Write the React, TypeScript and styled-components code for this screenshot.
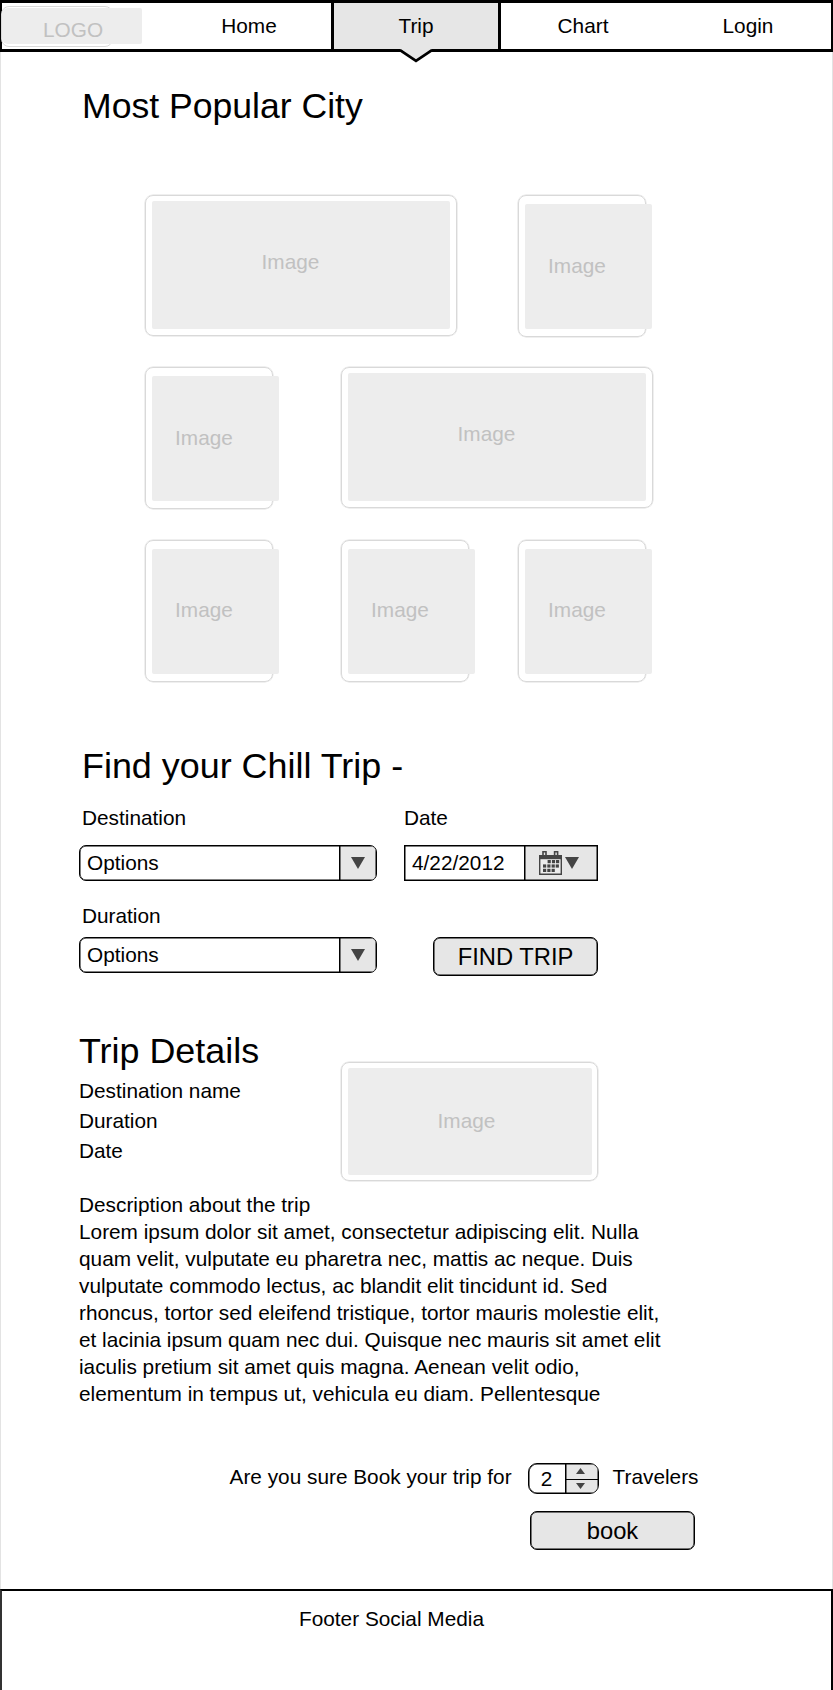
import React from "react";
import styled, { createGlobalStyle } from "styled-components";

const GlobalStyle = createGlobalStyle`
  * { box-sizing: border-box; }
  body {
    margin: 0;
    background: #fff;
    color: #000;
    font: 20.8px/27px "Liberation Sans", Arial, sans-serif;
  }
  h1, h2, p { margin: 0; font-weight: 400; }
  button, input { font: inherit; color: inherit; }
`;

const Page = styled.div`
  width: 833px;
  height: 1690px;
  display: flex;
  flex-direction: column;
  overflow: hidden;
`;

const Nav = styled.nav`
  position: relative;
  flex: none;
  display: grid;
  grid-template-columns: 167px 164px 170px 164px 1fr;
  height: 52px;
  border: solid #000;
  border-width: 3px 2px 3px 0;
`;

const NavItem = styled.a<{ $active?: boolean }>`
  display: flex;
  align-items: center;
  justify-content: center;
  padding-bottom: 1px;
  background: ${(p) => (p.$active ? "#e6e6e6" : "#fff")};
  border: solid #000;
  border-width: ${(p) => (p.$active ? "0 3px" : "0")};
`;

const NavPointer = styled.svg`
  position: absolute;
  left: 399px;
  top: 45px;
`;

const LogoCell = styled.div`
  border-left: 2px solid #000;
`;

const LogoFrame = styled.div`
  width: 112px;
  height: 41px;
  margin: 3px 0 0 -1px;
  padding-top: 1px;
  border: 1px solid #d9d9d9;
  border-radius: 8px;
`;

const LogoFill = styled.div`
  display: flex;
  align-items: center;
  width: 140px;
  height: 36px;
  padding: 6px 0 0 41px;
  border-radius: 6px 2px 2px 6px;
  background: #ededed;
  color: #c1c1c1;
`;

const Main = styled.main`
  flex: none;
  height: 1537px;
  padding-top: 33px;
  border: solid #e3e3e3;
  border-width: 0 1px;
`;

const Title = styled.h2`
  font-size: 35.9px;
  line-height: 42px;
`;

const LeadTitle = styled(Title)`
  font-size: 35.6px;
`;

const Popular = styled.section`
  padding-left: 81px;
`;

const Gallery = styled.div`
  display: flex;
  flex-direction: column;
  gap: 30px;
  width: 509px;
  margin: 68px 0 0 63px;
`;

const GalleryRow = styled.div<{ $columns: string; $height?: number }>`
  display: grid;
  grid-template-columns: ${(p) => p.$columns};
  height: ${(p) => p.$height ?? 142}px;
`;

const frameSizes = {
  wide: { w: 312, h: 141, pad: "5px 6px", iw: 298, ih: 128, text: "0 21px 7px 0" },
  square: { w: 128, h: 142, pad: "8px 6px", iw: 127, ih: 125, text: "0 23px 2px 0" },
  squareRaised: { w: 128, h: 142, pad: "8px 6px", iw: 127, ih: 125, text: "0 23px 4px 0" },
  detail: { w: 257, h: 119, pad: "5px 6px", iw: 244, ih: 107, text: "0 7px 3px 0" },
};

type FrameKind = keyof typeof frameSizes;

const Frame = styled.div<{ $kind: FrameKind }>`
  flex: none;
  width: ${(p) => frameSizes[p.$kind].w}px;
  height: ${(p) => frameSizes[p.$kind].h}px;
  padding: ${(p) => frameSizes[p.$kind].pad};
  border: 1px solid #d9d9d9;
  border-radius: 8px;
  box-shadow: 0 0 0 0.5px #e0e0e0;
`;

const FrameFill = styled.div<{ $kind: FrameKind }>`
  display: flex;
  align-items: center;
  justify-content: center;
  width: ${(p) => frameSizes[p.$kind].iw}px;
  height: ${(p) => frameSizes[p.$kind].ih}px;
  padding: ${(p) => frameSizes[p.$kind].text};
  border-radius: 2px;
  background: #ededed;
  color: #c1c1c1;
`;

const Finder = styled.section`
  margin-top: 63px;
  padding-left: 81px;
`;

const FinderGrid = styled.form`
  display: grid;
  grid-template-columns: 298px 194px;
  column-gap: 27px;
  margin: 17px 0 0 -3px;
`;

const Column = styled.div`
  display: flex;
  flex-direction: column;
`;

const Label = styled.label<{ $indent?: boolean; $top?: number }>`
  margin-top: ${(p) => p.$top ?? 0}px;
  padding-left: ${(p) => (p.$indent ? 3 : 0)}px;
`;

const Control = styled.div<{ $top: number; $square?: boolean }>`
  display: flex;
  height: 36px;
  margin-top: ${(p) => p.$top}px;
  border: 1.5px solid #000;
  border-radius: ${(p) => (p.$square ? 0 : 7)}px;
  box-shadow: inset 0 0 0 0.5px #000;
  overflow: hidden;
`;

const ControlValue = styled.span`
  flex: 1;
  padding: 3px 0 0 7px;
`;

const ControlToggle = styled.span<{ $width: number; $shift?: number }>`
  display: flex;
  align-items: center;
  justify-content: center;
  gap: 3px;
  width: ${(p) => p.$width}px;
  padding: 0 ${(p) => p.$shift ?? 1}px 1px 0;
  background: #e6e6e6;
  border-left: 1px solid #000;
  box-shadow: inset 0 0 0 0.5px #000;
`;

const Button = styled.button`
  width: 165px;
  height: 39px;
  padding: 0;
  border: 1px solid #000;
  border-radius: 7px;
  box-shadow: inset 0 0 0 0.5px #000;
  background: #e6e6e6;
  font-size: 23.75px;
  line-height: 35px;
`;

const FindButton = styled(Button)`
  align-self: flex-end;
  margin-top: 56px;
`;

const Details = styled.section`
  margin-top: 54px;
  padding-left: 78px;
`;

const DetailsTop = styled.div`
  display: flex;
  height: 161px;
`;

const DetailsText = styled.div`
  width: 262px;
`;

const Fact = styled.p<{ $first?: boolean }>`
  line-height: 30px;
  margin-top: ${(p) => (p.$first ? 4 : 0)}px;
`;

const DetailsImage = styled.div`
  padding-top: 32px;
`;

const Description = styled.p`
  width: 600px;
  white-space: pre-line;
`;

const Booking = styled.section`
  display: flex;
  flex-direction: column;
  align-items: flex-end;
  width: 698px;
  margin-top: 56px;
`;

const BookingRow = styled.div`
  display: flex;
  align-items: flex-start;
  padding-right: 0.5px;
`;

const Stepper = styled.div`
  display: grid;
  grid-template-columns: 36px 1fr;
  width: 71px;
  height: 31px;
  margin: 0 14px 0 16px;
  border: 1px solid #000;
  border-radius: 9px;
  box-shadow: inset 0 0 0 0.5px #000;
  overflow: hidden;
`;

const StepperValue = styled.span`
  padding-top: 1px;
  text-align: center;
`;

const StepperButtons = styled.span`
  display: grid;
  grid-template-rows: 1fr 1fr;
  background: #e6e6e6;
  border-left: 1px solid #000;
  box-shadow: inset 0 0 0 0.5px #000;
  > span {
    display: flex;
    align-items: center;
    justify-content: center;
    padding-right: 2px;
  }
  > span + span { border-top: 1px solid #000; }
`;

const BookButton = styled(Button)`
  margin: 17px 4px 0 0;
`;

const Footer = styled.footer`
  flex: 1;
  padding: 14px 0 0 297px;
  border: 2px solid #000;
  border-color: #000 #000 #000 #333;
  border-bottom: 0;
`;

const Caret = ({ size = 14, up = false }: { size?: number; up?: boolean }) => (
  <svg width={size} height={size === 14 ? 12 : 6} viewBox="0 0 14 11" preserveAspectRatio="none">
    <path d={up ? "M0 11h14L7 0z" : "M0 0h14L7 11z"} fill="#444" />
  </svg>
);

const dayCells = [
  [8.6, 9], [12.9, 9], [17, 9],
  [4, 13.4], [8.3, 13.4], [12.6, 13.4], [16.7, 13.4],
  [4, 17.8], [8.3, 17.8], [12.6, 17.8],
];

const CalendarIcon = () => (
  <svg width="23" height="24" viewBox="0 0 23 24">
    <path d="M.7 4.6h21.6v18.7H.7z" fill="#ececec" stroke="#444" strokeWidth="1.4" />
    <path d="M0 4h23v4.2H0z" fill="#444" />
    <path d="M4 .8h3v4H4zM15.6 .8h3v4h-3z" fill="#e6e6e6" stroke="#444" strokeWidth="1.6" />
    {dayCells.map(([x, y]) => (
      <rect key={`${x}-${y}`} x={x} y={y} width="3.2" height="3.2" fill="#444" />
    ))}
  </svg>
);

const ImageFrame = ({ kind }: { kind: FrameKind }) => (
  <Frame $kind={kind}>
    <FrameFill $kind={kind}>Image</FrameFill>
  </Frame>
);

const Select = ({ top }: { top: number }) => (
  <Control $top={top}>
    <ControlValue>Options</ControlValue>
    <ControlToggle $width={37}>
      <Caret />
    </ControlToggle>
  </Control>
);

const description = `Description about the trip
Lorem ipsum dolor sit amet, consectetur adipiscing elit. Nulla
quam velit, vulputate eu pharetra nec, mattis ac neque. Duis
vulputate commodo lectus, ac blandit elit tincidunt id. Sed
rhoncus, tortor sed eleifend tristique, tortor mauris molestie elit,
et lacinia ipsum quam nec dui. Quisque nec mauris sit amet elit
iaculis pretium sit amet quis magna. Aenean velit odio,
elementum in tempus ut, vehicula eu diam. Pellentesque`;

export default function App() {
  return (
    <>
      <GlobalStyle />
      <Page>
        <Nav>
          <LogoCell>
            <LogoFrame>
              <LogoFill>LOGO</LogoFill>
            </LogoFrame>
          </LogoCell>
          <NavItem>Home</NavItem>
          <NavItem $active>Trip</NavItem>
          <NavItem>Chart</NavItem>
          <NavItem>Login</NavItem>
          <NavPointer width="34" height="16" viewBox="0 0 34 16">
            <path d="M1 0h32v1L17 12.5 1 1z" fill="#e6e6e6" />
            <path d="M1 2.2 17 12.8 33 2.2" fill="none" stroke="#000" strokeWidth="2.8" />
          </NavPointer>
        </Nav>
        <Main>
          <Popular>
            <LeadTitle>Most Popular City</LeadTitle>
            <Gallery>
              <GalleryRow $columns="373px 1fr">
                <ImageFrame kind="wide" />
                <ImageFrame kind="square" />
              </GalleryRow>
              <GalleryRow $columns="196px 1fr" $height={143}>
                <ImageFrame kind="square" />
                <ImageFrame kind="wide" />
              </GalleryRow>
              <GalleryRow $columns="196px 177px 1fr">
                <ImageFrame kind="squareRaised" />
                <ImageFrame kind="squareRaised" />
                <ImageFrame kind="squareRaised" />
              </GalleryRow>
            </Gallery>
          </Popular>
          <Finder>
            <Title>Find your Chill Trip -</Title>
            <FinderGrid>
              <Column>
                <Label $indent>Destination</Label>
                <Select top={14} />
                <Label $indent $top={21}>Duration</Label>
                <Select top={8} />
              </Column>
              <Column>
                <Label>Date</Label>
                <Control $top={14} $square>
                  <ControlValue>4/22/2012</ControlValue>
                  <ControlToggle $width={73} $shift={5}>
                    <CalendarIcon />
                    <Caret />
                  </ControlToggle>
                </Control>
                <FindButton type="button">FIND TRIP</FindButton>
              </Column>
            </FinderGrid>
          </Finder>
          <Details>
            <DetailsTop>
              <DetailsText>
                <Title>Trip Details</Title>
                <Fact $first>Destination name</Fact>
                <Fact>Duration</Fact>
                <Fact>Date</Fact>
              </DetailsText>
              <DetailsImage>
                <ImageFrame kind="detail" />
              </DetailsImage>
            </DetailsTop>
            <Description>{description}</Description>
          </Details>
          <Booking>
            <BookingRow>
              <span>Are you sure Book your trip for</span>
              <Stepper>
                <StepperValue>2</StepperValue>
                <StepperButtons>
                  <span><Caret size={9} up /></span>
                  <span><Caret size={9} /></span>
                </StepperButtons>
              </Stepper>
              <span>Travelers</span>
            </BookingRow>
            <BookButton type="button">book</BookButton>
          </Booking>
        </Main>
        <Footer>Footer Social Media</Footer>
      </Page>
    </>
  );
}
